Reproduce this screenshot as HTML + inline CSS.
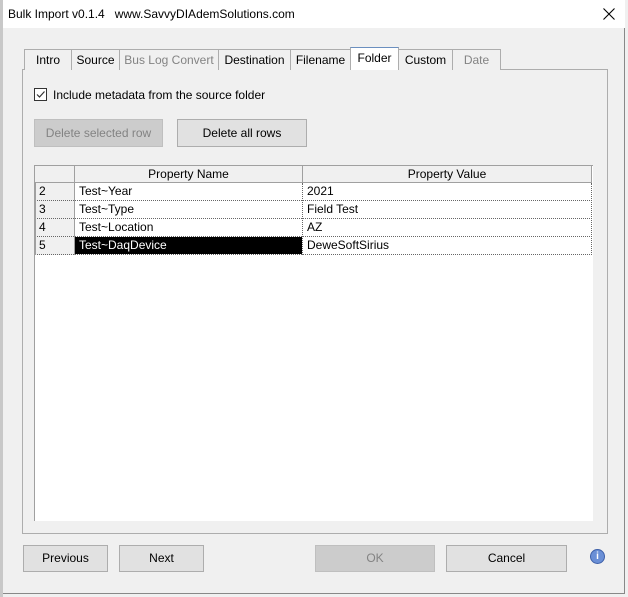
<!DOCTYPE html>
<html><head><style>
*{box-sizing:border-box;margin:0;padding:0}
body{width:628px;height:597px;background:#f0f0f0;font-family:"Liberation Sans",sans-serif;font-size:12px;color:#000;position:relative;overflow:hidden}
.a{position:absolute}
.tab{position:absolute;top:49px;height:21px;border:1px solid #adadad;border-bottom:none;background:#f0f0f0;text-align:center;line-height:20px;font-size:12px}
.dis{color:#838383}
.btn{position:absolute;border:1px solid #adadad;background:#e1e1e1;text-align:center;font-size:12px}
.cell{position:absolute;height:18px;line-height:17px;padding-left:4px;white-space:nowrap}
</style></head><body>
<div class="a" style="left:0;top:0;width:3px;height:597px;background:#c8c8c8"></div>
<div class="a" style="left:3px;top:0;width:622px;height:594px;background:#f0f0f0;border-right:1px solid #888;border-bottom:1px solid #888"></div>
<div class="a" style="left:3px;top:0;width:622px;height:28px;background:#fff"></div>
<div class="a" style="left:8px;top:7px;font-size:12px">Bulk Import v0.1.4&nbsp;&nbsp; www.SavvyDIAdemSolutions.com</div>
<svg class="a" style="left:603px;top:8px" width="12" height="12"><path d="M0.5 0.5 L11.5 11.5 M11.5 0.5 L0.5 11.5" stroke="#000" stroke-width="1.1"/></svg>

<div class="a" style="left:22px;top:69px;width:586px;height:465px;border:1px solid #adadad"></div>
<div class="tab" style="left:24px;width:48px">Intro</div>
<div class="tab" style="left:71px;width:49px">Source</div>
<div class="tab dis" style="left:119px;width:100px">Bus Log Convert</div>
<div class="tab" style="left:218px;width:73px">Destination</div>
<div class="tab" style="left:290px;width:61px">Filename</div>
<div class="tab" style="left:350px;width:49px;top:47px;height:23px;background:#fff;border-color:#6b8fbf #adadad #adadad #adadad;line-height:20px">Folder</div>
<div class="tab" style="left:398px;width:55px">Custom</div>
<div class="tab dis" style="left:452px;width:49px">Date</div>

<div class="a" style="left:34px;top:88px;width:13px;height:13px;border:1px solid #333;background:#fff"></div>
<svg class="a" style="left:34px;top:88px" width="13" height="13"><path d="M3 6.5 L5.5 9 L10.5 3.5" stroke="#333" stroke-width="1.2" fill="none"/></svg>
<div class="a" style="left:53px;top:88px">Include metadata from the source folder</div>

<div class="btn dis" style="left:34px;top:119px;width:129px;height:28px;line-height:26px;background:#cccccc;border-color:#bfbfbf">Delete selected row</div>
<div class="btn" style="left:177px;top:119px;width:130px;height:28px;line-height:26px">Delete all rows</div>

<div class="a" style="left:34px;top:165px;width:559px;height:356px;background:#fff;border:1px solid #a0a0a0;border-right:none;border-bottom:none"></div>
<div class="a" style="left:35px;top:166px;width:557px;height:16px;background:#f0f0f0"></div>
<div class="a" style="left:74px;top:166px;width:1px;height:16px;background:#a0a0a0"></div>
<div class="a" style="left:302px;top:166px;width:1px;height:16px;background:#a0a0a0"></div>
<div class="a" style="left:591px;top:166px;width:1px;height:16px;background:#a0a0a0"></div>
<div class="a" style="left:35px;top:182px;width:557px;height:1px;background:#a0a0a0"></div>
<div class="a" style="left:75px;top:167px;width:227px;text-align:center">Property Name</div>
<div class="a" style="left:303px;top:167px;width:288px;text-align:center">Property Value</div>

<div class="a" style="left:35px;top:183px;width:39px;height:72px;background:#f0f0f0"></div>
<div class="a" style="left:74px;top:183px;width:1px;height:72px;background:#a0a0a0"></div>
<div class="a" style="left:75px;top:183px;width:517px;height:72px;border-right:1px dotted #666"></div>

<div class="cell" style="left:35px;top:183px">2</div><div class="cell" style="left:75px;top:183px">Test~Year</div><div class="cell" style="left:303px;top:183px">2021</div>
<div class="a" style="left:35px;top:200px;width:557px;border-top:1px dotted #666"></div>
<div class="cell" style="left:35px;top:201px">3</div><div class="cell" style="left:75px;top:201px">Test~Type</div><div class="cell" style="left:303px;top:201px">Field Test</div>
<div class="a" style="left:35px;top:218px;width:557px;border-top:1px dotted #666"></div>
<div class="cell" style="left:35px;top:219px">4</div><div class="cell" style="left:75px;top:219px">Test~Location</div><div class="cell" style="left:303px;top:219px">AZ</div>
<div class="a" style="left:35px;top:236px;width:557px;border-top:1px dotted #666"></div>
<div class="a" style="left:75px;top:237px;width:227px;height:17px;background:#000"></div>
<div class="cell" style="left:35px;top:237px">5</div><div class="cell" style="left:75px;top:237px;color:#fff">Test~DaqDevice</div><div class="cell" style="left:303px;top:237px">DeweSoftSirius</div>
<div class="a" style="left:35px;top:254px;width:557px;border-top:1px dotted #666"></div>
<div class="a" style="left:302px;top:183px;height:72px;border-left:1px dotted #666"></div>
<div class="a" style="left:35px;top:182px;height:73px;width:1px;background:#a0a0a0"></div>

<div class="btn" style="left:23px;top:545px;width:85px;height:27px;line-height:25px">Previous</div>
<div class="btn" style="left:119px;top:545px;width:85px;height:27px;line-height:25px">Next</div>
<div class="btn dis" style="left:315px;top:545px;width:120px;height:27px;line-height:25px;background:#cccccc;border-color:#bfbfbf">OK</div>
<div class="btn" style="left:446px;top:545px;width:121px;height:27px;line-height:25px">Cancel</div>
<div class="a" style="left:590px;top:549px;width:15px;height:15px;border-radius:50%;background:#6a8fd6;border:1px solid #3d5fa8;color:#fff;font-size:10px;font-weight:bold;text-align:center;line-height:13px">i</div>
</body></html>
